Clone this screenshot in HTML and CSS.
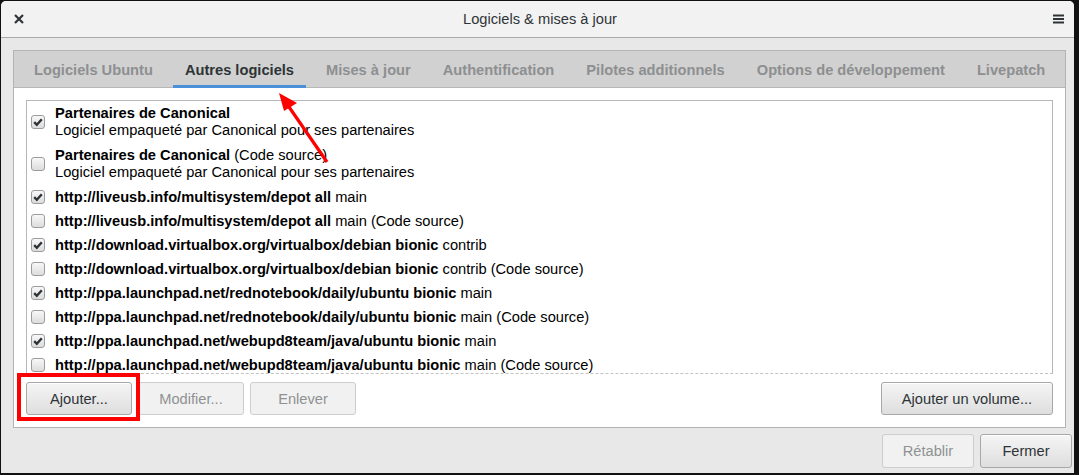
FILE: index.html
```html
<!DOCTYPE html>
<html lang="fr">
<head>
<meta charset="utf-8">
<title>Logiciels &amp; mises à jour</title>
<link rel="stylesheet" href="styles.css">
</head>
<body>
<div class="window">
  <div class="titlebar">
    <span class="tb-close"><svg width="10" height="10" viewBox="0 0 10 10"><path d="M1 1L9 9M9 1L1 9" stroke="#2e3436" stroke-width="2.2" fill="none"/></svg></span>
    <span class="tb-title">Logiciels &amp; mises à jour</span>
    <span class="tb-menu"><svg width="11" height="10" viewBox="0 0 11 10"><path d="M0 1.5H11M0 5H11M0 8.5H11" stroke="#2e3436" stroke-width="2" fill="none"/></svg></span>
  </div>
  <div class="win-body">
    <div class="notebook">
      <div class="tabbar">
        <div class="tab">Logiciels Ubuntu</div>
        <div class="tab active">Autres logiciels</div>
        <div class="tab">Mises à jour</div>
        <div class="tab">Authentification</div>
        <div class="tab">Pilotes additionnels</div>
        <div class="tab">Options de développement</div>
        <div class="tab">Livepatch</div>
      </div>
      <div class="page">
        <div class="list">
          <div class="row two">
            <span class="cb checked"><svg width="14" height="14" viewBox="0 0 14 14"><path d="M3.2 7.2L5.8 9.8L10.8 4.2" stroke="#2e3436" stroke-width="2.4" fill="none"/></svg></span>
            <div class="txt"><div><b>Partenaires de Canonical</b></div><div>Logiciel empaqueté par Canonical pour ses partenaires</div></div>
          </div>
          <div class="row two">
            <span class="cb"></span>
            <div class="txt"><div><b>Partenaires de Canonical</b> (Code source)</div><div>Logiciel empaqueté par Canonical pour ses partenaires</div></div>
          </div>
          <div class="row">
            <span class="cb checked"><svg width="14" height="14" viewBox="0 0 14 14"><path d="M3.2 7.2L5.8 9.8L10.8 4.2" stroke="#2e3436" stroke-width="2.4" fill="none"/></svg></span>
            <div class="txt"><b>http://liveusb.info/multisystem/depot all</b> main</div>
          </div>
          <div class="row">
            <span class="cb"></span>
            <div class="txt"><b>http://liveusb.info/multisystem/depot all</b> main (Code source)</div>
          </div>
          <div class="row">
            <span class="cb checked"><svg width="14" height="14" viewBox="0 0 14 14"><path d="M3.2 7.2L5.8 9.8L10.8 4.2" stroke="#2e3436" stroke-width="2.4" fill="none"/></svg></span>
            <div class="txt"><b>http://download.virtualbox.org/virtualbox/debian bionic</b> contrib</div>
          </div>
          <div class="row">
            <span class="cb"></span>
            <div class="txt"><b>http://download.virtualbox.org/virtualbox/debian bionic</b> contrib (Code source)</div>
          </div>
          <div class="row">
            <span class="cb checked"><svg width="14" height="14" viewBox="0 0 14 14"><path d="M3.2 7.2L5.8 9.8L10.8 4.2" stroke="#2e3436" stroke-width="2.4" fill="none"/></svg></span>
            <div class="txt"><b>http://ppa.launchpad.net/rednotebook/daily/ubuntu bionic</b> main</div>
          </div>
          <div class="row">
            <span class="cb"></span>
            <div class="txt"><b>http://ppa.launchpad.net/rednotebook/daily/ubuntu bionic</b> main (Code source)</div>
          </div>
          <div class="row">
            <span class="cb checked"><svg width="14" height="14" viewBox="0 0 14 14"><path d="M3.2 7.2L5.8 9.8L10.8 4.2" stroke="#2e3436" stroke-width="2.4" fill="none"/></svg></span>
            <div class="txt"><b>http://ppa.launchpad.net/webupd8team/java/ubuntu bionic</b> main</div>
          </div>
          <div class="row">
            <span class="cb"></span>
            <div class="txt"><b>http://ppa.launchpad.net/webupd8team/java/ubuntu bionic</b> main (Code source)</div>
          </div>
        </div>
        <div class="btnrow">
          <div class="group">
            <button class="btn w106">Ajouter...</button>
            <button class="btn w106" disabled>Modifier...</button>
            <button class="btn w106" disabled>Enlever</button>
          </div>
          <button class="btn w172">Ajouter un volume...</button>
        </div>
      </div>
    </div>
    <div class="actions">
      <button class="btn w92 tall" disabled>Rétablir</button>
      <button class="btn w92 tall">Fermer</button>
    </div>
  </div>
</div>
<div class="mark-rect"></div>
<svg class="mark-arrow" width="1079" height="475" viewBox="0 0 1079 475">
  <path d="M327 162L287 104" stroke="#f00" stroke-width="3.2" fill="none"/>
  <path d="M279 93L297 103L284 111Z" fill="#f00"/>
</svg>
</body>
</html>
```
FILE: styles.css
```css
html, body {
  margin: 0;
  padding: 0;
  background: #111;
}
body {
  width: 1079px;
  height: 475px;
  overflow: hidden;
  position: relative;
  font-family: "Liberation Sans", Arial, sans-serif;
  font-size: 14.67px;
  color: #2e3436;
}
.window {
  margin: 1px 0 0 1px;
  width: 1073px;
  height: 472px;
  background: #e8e8e8;
  border-radius: 5px 5px 0 0;
  overflow: hidden;
  display: flex;
  flex-direction: column;
}
.titlebar {
  height: 36px;
  flex: none;
  background: #f2f2f2;
  border-bottom: 1px solid #a9a9a9;
  display: flex;
  align-items: center;
  justify-content: space-between;
  padding: 0 10px 0 13px;
}
.tb-close, .tb-menu {
  display: flex;
  width: 11px;
  height: 10px;
}
.tb-title {
  color: #2e3436;
  line-height: 17px;
  margin-left: 2px;
}
.win-body {
  padding: 12px 2px 0 12px;
  display: flex;
  flex-direction: column;
}
.notebook {
  margin-right: 6px;
  border: 1px solid #b3b3b3;
  background: #fff;
}
.tabbar {
  height: 36px;
  background: #d1d1d1;
  border-bottom: 1px solid #b6b6b6;
  display: flex;
  gap: 8px;
  padding-left: 8px;
}
.tab {
  padding: 0 12px;
  height: 37px;
  margin-bottom: -1px;
  box-sizing: border-box;
  display: flex;
  align-items: center;
  font-weight: bold;
  color: #8d8f90;
  white-space: nowrap;
}
.tab.active {
  color: #2e3436;
  box-shadow: inset 0 -3px 0 #4a90d9;
}
.page {
  padding: 12px;
}
.list {
  height: 274px;
  box-sizing: border-box;
  border: 1px solid #b7b7b7;
  border-bottom: 1px dashed #c2c2c2;
  overflow: hidden;
  color: #000;
}
.row {
  display: flex;
  align-items: center;
  gap: 10px;
  padding: 3.5px 0 3.5px 4px;
  line-height: 17px;
  white-space: nowrap;
}
.row.two {
  padding: 4px 0 4px 4px;
}
.cb {
  flex: none;
  width: 14px;
  height: 14px;
  box-sizing: border-box;
  border: 1px solid #9c9c9c;
  border-radius: 3px;
  background: linear-gradient(#f8f8f8, #dcdcdc);
  display: flex;
  align-items: center;
  justify-content: center;
}
.cb svg {
  flex: none;
  margin: -1px;
}
.txt b {
  font-weight: bold;
}
.btnrow {
  margin-top: 8px;
  display: flex;
  justify-content: space-between;
}
.group {
  display: flex;
  gap: 6px;
}
.btn {
  height: 33px;
  box-sizing: border-box;
  border: 1px solid #a8a8a8;
  border-radius: 3px;
  background: linear-gradient(#f5f5f5, #dedede);
  font-family: "Liberation Sans", Arial, sans-serif;
  font-size: 14.67px;
  color: #2e3436;
  padding: 0;
  box-shadow: inset 0 1px #fff;
}
.btn:disabled {
  background: #f1f1f1;
  border-color: #cdcdcd;
  color: #8f9293;
  box-shadow: none;
}
.w106 { width: 106px; }
.w172 { width: 172px; }
.w92 { width: 92px; }
.tall { height: 34px; }
.actions {
  margin-top: 6px;
  display: flex;
  justify-content: flex-end;
  gap: 6px;
}
.mark-rect {
  position: absolute;
  left: 17px;
  top: 373px;
  width: 123px;
  height: 48px;
  box-sizing: border-box;
  border: 4px solid #f00;
}
.mark-arrow {
  position: absolute;
  left: 0;
  top: 0;
  pointer-events: none;
}
```
